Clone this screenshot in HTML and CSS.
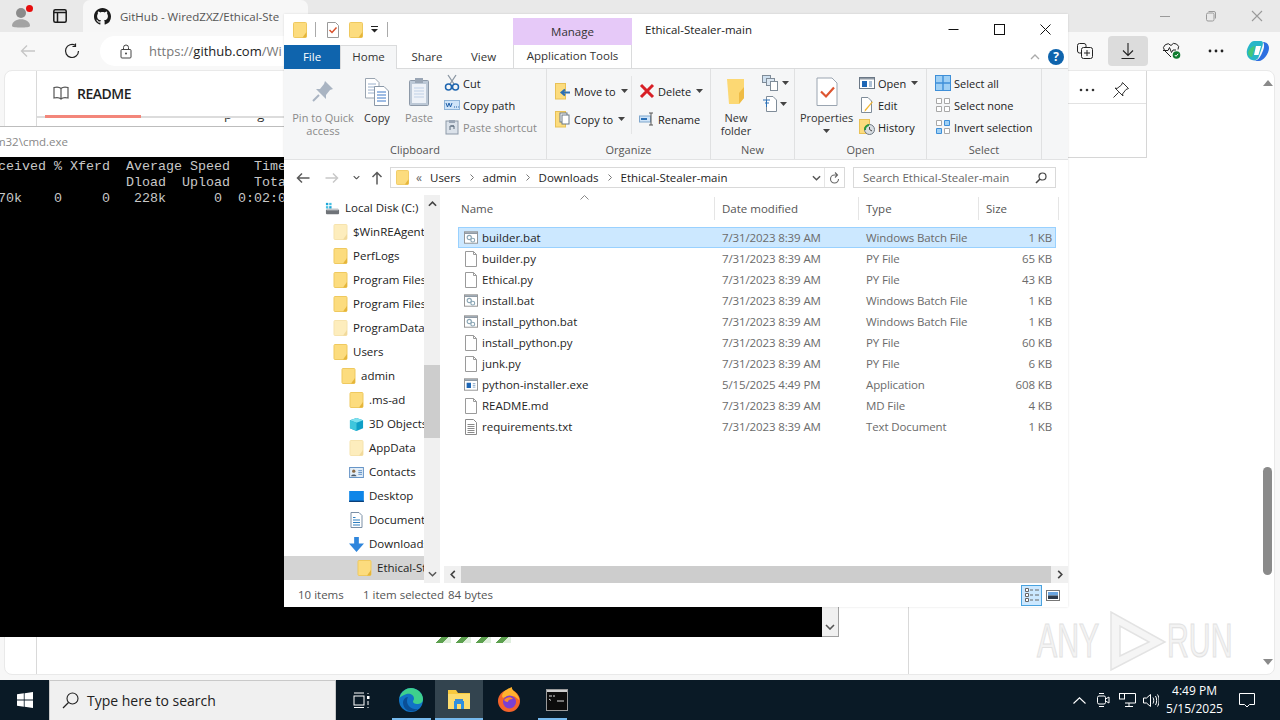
FILE: index.html
```html
<!DOCTYPE html>
<html lang="en">
<head>
<meta charset="utf-8">
<title>Ethical-Stealer-main</title>
<link rel="stylesheet" href="styles.css">
</head>
<body>
<svg class="defs" width="0" height="0" aria-hidden="true">
  <defs>
    <symbol id="folder" viewBox="0 0 14 16"><rect x=".5" y=".5" width="13" height="15" rx="1" fill="#fcdc7e" stroke="#efc95f"/><path d="M9.5 15.5 L13.5 10 V14.5 a1 1 0 0 1-1 1z" fill="#e5b53a"/></symbol>
    <symbol id="page" viewBox="0 0 14 16"><path d="M1.5.5H9.5L12.5 3.5V15.5H1.5Z" fill="#fff" stroke="#9a9a9a"/><path d="M9.5.5V3.5H12.5" fill="none" stroke="#9a9a9a"/></symbol>
    <symbol id="txt" viewBox="0 0 14 16"><path d="M1.5.5H9.5L12.5 3.5V15.5H1.5Z" fill="#fff" stroke="#8a8a8a"/><path d="M3.5 5.5H10.5M3.5 7.5H10.5M3.5 9.5H10.5M3.5 11.5H10.5M3.5 13.5H10.5" stroke="#8a8a8a"/></symbol>
    <symbol id="bat" viewBox="0 0 16 14"><rect x=".5" y=".5" width="15" height="13" fill="#fff" stroke="#8a8a8a"/><rect x="1" y="1" width="14" height="2" fill="#8f9aa5"/><circle cx="6" cy="7" r="2.4" fill="none" stroke="#8aa6b5" stroke-width="1.3"/><circle cx="10" cy="10" r="2.2" fill="none" stroke="#8aa6b5" stroke-width="1.3"/></symbol>
    <symbol id="exe" viewBox="0 0 16 14"><rect x=".5" y=".5" width="15" height="13" fill="#fff" stroke="#8a8a8a"/><rect x="1" y="1" width="14" height="2" fill="#8f9aa5"/><rect x="3" y="5" width="5" height="6" fill="#1d66b5"/><path d="M10 6H13M10 8H13M10 10H13" stroke="#7f9fc0"/></symbol>
    <symbol id="drive" viewBox="0 0 16 16"><rect x="1" y="9" width="14" height="5" rx="1" fill="#6f7378"/><rect x="2" y="8" width="12" height="2" fill="#c2c6ca"/><rect x="1" y="2" width="2.5" height="2.5" fill="#1fa7d8"/><rect x="4.5" y="2" width="2.5" height="2.5" fill="#45c0e3"/><rect x="1" y="5.5" width="2.5" height="2.5" fill="#45c0e3"/><rect x="4.5" y="5.5" width="2.5" height="2.5" fill="#1fa7d8"/></symbol>
    <symbol id="cube" viewBox="0 0 16 16"><path d="M8 1 15 3.5V12L8 15 1 12V3.5Z" fill="#0e9fc7"/><path d="M1 3.5 8 1 15 3.5 8 6Z" fill="#7fe2ef"/><path d="M1 3.5 8 6V15L1 12Z" fill="#3fc6dc"/></symbol>
    <symbol id="contacts" viewBox="0 0 16 12"><rect x=".5" y=".5" width="15" height="11" fill="#e3eef8" stroke="#5b8cc2"/><circle cx="5" cy="4.5" r="1.8" fill="#8a6a45"/><path d="M2 10c.3-2.6 5.7-2.6 6 0z" fill="#4a5a6a"/><path d="M10 4H14M10 6H14M10 8H14" stroke="#5b8cc2"/></symbol>
    <symbol id="desktop" viewBox="0 0 16 12"><rect width="16" height="12" fill="#0f86e8"/><rect y="10.5" width="16" height="1.5" fill="#0b3f78"/></symbol>
    <symbol id="docs" viewBox="0 0 14 16"><path d="M1.5.5H9.5L12.5 3.5V15.5H1.5Z" fill="#fff" stroke="#7b8fa5"/><path d="M3.5 5.5H6M3.5 8H10.5M3.5 10.5H10.5M3.5 13H10.5" stroke="#2f7fbf"/></symbol>
    <symbol id="dl" viewBox="0 0 16 16"><path d="M5.5 0H10.5V7H16L8 16 0 7H5.5Z" fill="#2f86dc"/></symbol>
    <symbol id="chev-down" viewBox="0 0 10 6"><path d="M1 1 5 5 9 1" fill="none" stroke="#555" stroke-width="1.6"/></symbol>
    <symbol id="caret" viewBox="0 0 7 4"><path d="M0 0H7L3.5 4Z" fill="#444"/></symbol>
  </defs>
</svg>

<div class="desktop">
  <div class="browser">
    <div class="tabstrip">
      <div class="avatar">
        <svg width="26" height="26" viewBox="0 0 26 26"><circle cx="11" cy="9" r="5" fill="#8b8b8b"/><path d="M2 22c0-9 18-9 18 0 0 2-18 2-18 0z" fill="#a3a3a3"/><circle cx="19.5" cy="4.5" r="3.5" fill="#e60d0d"/></svg>
      </div>
      <div class="tabview">
        <svg width="14" height="14" viewBox="0 0 14 14"><rect x=".8" y=".8" width="12.4" height="12.4" rx="1.5" fill="none" stroke="#1a1a1a" stroke-width="1.5"/><path d="M1 3.5H13M4.5 3.5V13" stroke="#1a1a1a" stroke-width="1.5"/></svg>
      </div>
      <div class="tab">
        <svg class="gh" width="16" height="16" viewBox="0 0 16 16"><path fill="#1b1b1b" d="M8 0C3.58 0 0 3.58 0 8c0 3.54 2.29 6.53 5.47 7.59.4.07.55-.17.55-.38 0-.19-.01-.82-.01-1.49-2.01.37-2.53-.49-2.69-.94-.09-.23-.48-.94-.82-1.13-.28-.15-.68-.52-.01-.53.63-.01 1.08.58 1.23.82.72 1.21 1.87.87 2.33.66.07-.52.28-.87.51-1.07-1.78-.2-3.64-.89-3.64-3.95 0-.87.31-1.59.82-2.15-.08-.2-.36-1.02.08-2.12 0 0 .67-.21 2.2.82.64-.18 1.32-.27 2-.27.68 0 1.36.09 2 .27 1.53-1.04 2.2-.82 2.2-.82.44 1.1.16 1.92.08 2.12.51.56.82 1.27.82 2.15 0 3.07-1.87 3.75-3.65 3.95.29.25.54.73.54 1.48 0 1.07-.01 1.93-.01 2.2 0 .21.15.46.55.38A8.013 8.013 0 0016 8c0-4.42-3.58-8-8-8z"/></svg>
        <span class="tab-title">GitHub - WiredZXZ/Ethical-Ste</span>
      </div>
      <div class="winctl">
        <span class="winbtn"><svg width="12" height="12" viewBox="0 0 12 12"><path d="M1 6.5H11" stroke="#9a9a9a"/></svg></span>
        <span class="winbtn"><svg width="12" height="12" viewBox="0 0 12 12"><rect x="1.5" y="3" width="7.5" height="8" rx="1.5" fill="none" stroke="#9a9a9a"/><path d="M3.5 1.5H9a1.5 1.5 0 0 1 1.5 1.5V8.5" fill="none" stroke="#9a9a9a"/></svg></span>
        <span class="winbtn"><svg width="12" height="12" viewBox="0 0 12 12"><path d="M1 1 11 11M11 1 1 11" stroke="#9a9a9a" stroke-width="1.1"/></svg></span>
      </div>
    </div>

    <div class="toolbar">
      <span class="tool tool-back"><svg width="16" height="14" viewBox="0 0 16 14"><path d="M15 7H1.5M7 1.5 1.5 7 7 12.5" fill="none" stroke="#c6c6c6" stroke-width="1.3"/></svg></span>
      <span class="tool tool-reload"><svg width="16" height="16" viewBox="0 0 16 16"><path d="M14.5 8A6.5 6.5 0 1 1 11.5 2.5M11.5 .5V3.5H8.5" fill="none" stroke="#222" stroke-width="1.2"/></svg></span>
      <div class="urlbar">
        <svg class="lock" width="12" height="15" viewBox="0 0 12 15"><rect x="1" y="5.5" width="10" height="8.5" rx="1" fill="none" stroke="#444"/><path d="M3.5 5.5V3.5a2.5 2.5 0 0 1 5 0v2" fill="none" stroke="#444"/><circle cx="6" cy="9.5" r="1" fill="#444"/></svg>
        <span class="url"><span class="url-dim">https://</span>github.com<span class="url-dim">/Wi</span></span>
      </div>
      <div class="toolright">
        <span class="tool tool-coll"><svg width="18" height="18" viewBox="0 0 18 18"><path d="M5 11H3.5A2 2 0 0 1 1.5 9V3.5A2 2 0 0 1 3.5 1.5H8A2 2 0 0 1 10 3.5V5" fill="none" stroke="#222"/><rect x="5.5" y="5.5" width="11" height="11" rx="2" fill="none" stroke="#222"/><path d="M11 8V14M8 11H14" stroke="#222"/></svg></span>
        <span class="tool tool-dl"><svg width="18" height="18" viewBox="0 0 18 18"><path d="M9 1V13M4 8.5 9 13.5 14 8.5M2.5 16.5H15.5" fill="none" stroke="#222" stroke-width="1.1"/></svg></span>
        <span class="tool tool-heart"><svg width="20" height="18" viewBox="0 0 20 18"><path d="M9 15 2.5 8.5A4 4 0 0 1 9 3.5a4 4 0 0 1 7 4" fill="none" stroke="#222"/><path d="M1 8.5H6L7.5 5.5 9.5 10.5 11 8H14" fill="none" stroke="#222"/><circle cx="14.5" cy="13" r="3.8" fill="#0f7b2f"/><path d="M12.8 13 14 14.3 16.2 11.8" fill="none" stroke="#fff"/></svg></span>
        <span class="tool tool-more"><svg width="16" height="4" viewBox="0 0 16 4"><circle cx="2" cy="2" r="1.4" fill="#222"/><circle cx="8" cy="2" r="1.4" fill="#222"/><circle cx="14" cy="2" r="1.4" fill="#222"/></svg></span>
        <span class="tool tool-copilot"><svg width="24" height="24" viewBox="0 0 24 24"><path d="M8 2H15C18 2 17 6 15.5 10L13 17C12 21 9 22 6 21 2 20 0 15 1 11 2 7 5 2 8 2Z" fill="#27b6c8"/><path d="M7 22H13C17 22 23 15 23 9 23 5 20 3 17 3 19 6 18 10 16 14 14 19 11 22 7 22Z" fill="#2d6fe0"/><path d="M10 7H15L12.5 16H8Z" fill="#fff"/><path d="M2 14C3 10 6 7 9 7L6 18C4 18 2 16 2 14Z" fill="#42c77a"/></svg></span>
      </div>
    </div>

    <div class="card">
      <div class="rail"></div>
      <div class="readme">
        <div class="readme-head">
          <div class="readme-tab">
            <svg width="16" height="14" viewBox="0 0 16 14"><path d="M8 2.5C6.5 1 3.5 1 1 1.5V12C3.5 11.5 6.5 11.5 8 13 9.5 11.5 12.5 11.5 15 12V1.5C12.5 1 9.5 1 8 2.5ZM8 2.5V13" fill="none" stroke="#555" stroke-width="1.2"/></svg>
            <span>README</span>
          </div>
        </div>
        <div class="readme-clip"><p>p g j</p></div>
      </div>
      <div class="side">
        <div class="side-panel">
          <div class="side-row">
            <svg width="16" height="4" viewBox="0 0 16 4"><circle cx="2" cy="2" r="1.3" fill="#333"/><circle cx="8" cy="2" r="1.3" fill="#333"/><circle cx="14" cy="2" r="1.3" fill="#333"/></svg>
            <svg width="18" height="18" viewBox="0 0 18 18"><path d="M10.5 1.5 16.5 7.5 14 8.5 10.5 13 11 15 3 7 5 7.5 9.5 4Z M6.5 11.5 1.5 16.5" fill="#fff" stroke="#333"/></svg>
          </div>
        </div>
      </div>
      <div class="pagescroll">
        <svg width="10" height="6" viewBox="0 0 10 6"><path d="M0 6 5 0 10 6Z" fill="#8a8a8a"/></svg>
        <div class="pagescroll-track"><div class="pagescroll-thumb"></div></div>
        <svg width="10" height="6" viewBox="0 0 10 6"><path d="M0 0 5 6 10 0Z" fill="#8a8a8a"/></svg>
      </div>
    </div>
  </div>

  <div class="watermark"><span>ANY</span><svg width="60" height="62" viewBox="0 0 60 62"><path d="M4 2V60L58 32Z M13 16V46L42 32Z" fill="#f5f5f5" fill-rule="evenodd" stroke="#e3e3e3" stroke-width="1.5"/></svg><span>RUN</span></div>

  <div class="tiles">
    <i class="tile"></i><i class="tile"></i><i class="tile"></i><i class="tile"></i>
  </div>

  <section class="cmd">
    <div class="cmd-title">C:\Windows\system32\cmd.exe</div>
    <div class="cmd-body">
      <pre class="console">ceived % Xferd  Average Speed   Time    Time     Time  Current
                Dload  Upload   Total   Spent    Left  Speed
70k    0     0   228k      0  0:02:06 --:--:--  0:02:06  228k</pre>
      <div class="cmd-scroll"><svg width="10" height="6"><use href="#chev-down"/></svg></div>
    </div>
  </section>

  <section class="explorer">
    <div class="ex-title">
      <div class="qa">
        <svg width="14" height="16"><use href="#folder"/></svg>
        <i class="qa-sep"></i>
        <svg class="qa-props" width="14" height="16" viewBox="0 0 14 16"><path d="M1.5.5H9.5L12.5 3.5V15.5H1.5Z" fill="#fff" stroke="#9a9a9a"/><path d="M3.5 8 6 10.5 10.5 5.5" fill="none" stroke="#d9512c" stroke-width="1.5"/></svg>
        <svg class="qa-folder" width="14" height="16"><use href="#folder"/></svg>
        <svg class="qa-more" width="9" height="7" viewBox="0 0 9 7"><path d="M1 .5H8" stroke="#222"/><path d="M1 3H8L4.5 6.5Z" fill="#222"/></svg>
        <i class="qa-sep"></i>
      </div>
      <div class="manage">Manage</div>
      <div class="ex-name">Ethical-Stealer-main</div>
      <div class="ex-ctl">
        <span class="ctl"><svg width="11" height="11" viewBox="0 0 11 11"><path d="M.5 5.5H10.5" stroke="#111"/></svg></span>
        <span class="ctl"><svg width="11" height="11" viewBox="0 0 11 11"><rect x=".5" y=".5" width="10" height="10" fill="none" stroke="#111"/></svg></span>
        <span class="ctl"><svg width="11" height="11" viewBox="0 0 11 11"><path d="M.5 .5 10.5 10.5M10.5 .5 .5 10.5" stroke="#111"/></svg></span>
      </div>
    </div>

    <div class="ex-tabs">
      <span class="rtab rtab-file">File</span>
      <span class="rtab rtab-home">Home</span>
      <span class="rtab rtab-share">Share</span>
      <span class="rtab rtab-view">View</span>
      <span class="rtab rtab-app">Application Tools</span>
      <div class="ex-help">
        <svg width="10" height="6" viewBox="0 0 10 6"><path d="M1 5 5 1 9 5" fill="none" stroke="#aaa" stroke-width="1.3"/></svg>
        <span class="help">?</span>
      </div>
    </div>

    <div class="ribbon">
      <div class="group g-clip">
        <div class="g-body">
          <div class="big big-pin off">
            <svg width="24" height="26" viewBox="0 0 24 26"><path d="M14 2 22 10 19 11 15 16 15 20 5 10 9 10 13 5Z" fill="#a9b4c2"/><path d="M8 16 2 22" stroke="#a9b4c2" stroke-width="2"/></svg>
            <span>Pin to Quick<br>access</span>
          </div>
          <div class="big big-copy">
            <svg width="26" height="30" viewBox="0 0 26 30"><path d="M1.5 1.5H11L15 5.5V21H1.5Z" fill="#fff" stroke="#9aa5b1"/><path d="M4 7H12M4 10H12M4 13H12M4 16H12" stroke="#9ab0cc"/><path d="M10.5 9.5H20L24.5 14V28.5H10.5Z" fill="#fff" stroke="#8a98a8"/><path d="M13 15H22M13 18H22M13 21H22M13 24H22" stroke="#3c79c8"/></svg>
            <span>Copy</span>
          </div>
          <div class="big big-paste off">
            <svg width="22" height="30" viewBox="0 0 22 30"><rect x="1.5" y="3.5" width="19" height="25" rx="1" fill="#bcc8d6" stroke="#8d99a8"/><rect x="4" y="7" width="14" height="19" fill="#eef2f8"/><path d="M6 11H16M6 14H16M6 17H16M6 20H16" stroke="#bfd0e6"/><rect x="7" y="1" width="8" height="5" fill="#9aa6b5"/></svg>
            <span>Paste</span>
          </div>
          <div class="smalls">
            <div class="small"><svg width="16" height="18" viewBox="0 0 16 18"><path d="M4 1 10 10M12 1 6 10" stroke="#8a96a3" stroke-width="1.3"/><circle cx="4.5" cy="13" r="3" fill="none" stroke="#1f66b0" stroke-width="1.5"/><circle cx="11.5" cy="13" r="3" fill="none" stroke="#1f66b0" stroke-width="1.5"/></svg><span>Cut</span></div>
            <div class="small"><svg width="16" height="10" viewBox="0 0 16 10"><rect x=".5" y=".5" width="15" height="9" fill="#cfe4f8" stroke="#8fb4d8"/><path d="M2 3 3.5 7 5 3 6.5 7 8 3M10 7H11M12 7H13M14 7H14.8" fill="none" stroke="#1f5fa8"/></svg><span>Copy path</span></div>
            <div class="small off"><svg width="14" height="16" viewBox="0 0 14 16"><rect x="1" y="2" width="12" height="13" fill="#dbe2ea" stroke="#8d99a8"/><rect x="4" y="1" width="6" height="3" fill="#9aa6b5"/><path d="M5 11V7H9M6 7l3 0v3" fill="none" stroke="#5a6a7a"/></svg><span>Paste shortcut</span></div>
          </div>
        </div>
        <div class="g-label">Clipboard</div>
      </div>

      <div class="group g-org">
        <div class="g-body">
          <div class="smalls two">
            <div class="small"><svg width="16" height="17" viewBox="0 0 16 17"><rect x=".5" y=".5" width="10" height="15.5" fill="#fcdc7e" stroke="#e8c157"/><path d="M15 9.5H8M10 6.5 6.5 9.5 10 12.5" fill="none" stroke="#2a6fb5" stroke-width="2"/></svg><span>Move to</span><svg class="cr" width="7" height="4"><use href="#caret"/></svg></div>
            <div class="small"><svg width="16" height="17" viewBox="0 0 16 17"><rect x=".5" y=".5" width="10" height="15.5" fill="#fcdc7e" stroke="#e8c157"/><rect x="5" y="2" width="7" height="9" fill="#fff" stroke="#6b7886"/><rect x="7" y="4" width="7" height="9" fill="#fff" stroke="#6b7886"/></svg><span>Copy to</span><svg class="cr" width="7" height="4"><use href="#caret"/></svg></div>
          </div>
          <i class="g-sep"></i>
          <div class="smalls two">
            <div class="small"><svg width="16" height="16" viewBox="0 0 16 16"><path d="M2 2 14 14M14 2 2 14" stroke="#d81f26" stroke-width="3"/></svg><span>Delete</span><svg class="cr" width="7" height="4"><use href="#caret"/></svg></div>
            <div class="small"><svg width="16" height="16" viewBox="0 0 16 16"><rect x=".5" y="5" width="11" height="6" fill="#cfe4f8" stroke="#7fa6cc"/><rect x="2" y="7" width="6" height="2" fill="#2a6fb5"/><path d="M10 2H14M12 2V14M10 14H14" fill="none" stroke="#555"/></svg><span>Rename</span></div>
          </div>
        </div>
        <div class="g-label">Organize</div>
      </div>

      <div class="group g-new">
        <div class="g-body">
          <div class="big big-new">
            <svg width="20" height="28" viewBox="0 0 20 28"><path d="M1 1H18V20L13 26H3Z" fill="#fcd873"/><path d="M13 26 18 20V9L13 15Z" fill="#efbc45"/></svg>
            <span>New<br>folder</span>
          </div>
          <div class="new-smalls">
            <div class="mini"><svg width="18" height="16" viewBox="0 0 18 16"><rect x=".5" y=".5" width="8" height="7" fill="#cfe0ef" stroke="#7f8c99"/><rect x="4.5" y="3.5" width="8" height="7" fill="#dbe7f2" stroke="#7f8c99"/><rect x="8.5" y="6.5" width="7" height="9" fill="#fff" stroke="#7f8c99"/></svg><svg width="7" height="4"><use href="#caret"/></svg></div>
            <div class="mini"><svg width="16" height="16" viewBox="0 0 16 16"><path d="M4.5.5H11L14.5 4V15.5H4.5Z" fill="#fff" stroke="#7f8c99"/><path d="M1 4H8M3 7H7M4.5 4V11" stroke="#2a6fb5"/></svg><svg width="7" height="4"><use href="#caret"/></svg></div>
          </div>
        </div>
        <div class="g-label">New</div>
      </div>

      <div class="group g-open">
        <div class="g-body">
          <div class="big big-props">
            <svg width="22" height="29" viewBox="0 0 22 29"><path d="M1 .5H16L21 5.5V28H1Z" fill="#fff" stroke="#9aa5b1"/><path d="M5 14 10 19 18 10" fill="none" stroke="#dd5530" stroke-width="2.2"/></svg>
            <span>Properties</span>
            <svg class="props-caret" width="7" height="4"><use href="#caret"/></svg>
          </div>
          <div class="smalls">
            <div class="small"><svg width="16" height="12" viewBox="0 0 16 12"><rect x=".5" y=".5" width="15" height="11" fill="#fff" stroke="#6b7886"/><rect x="1" y="1" width="14" height="1.5" fill="#8f9aa5"/><rect x="3" y="4" width="5" height="6" fill="#1d66b5"/><path d="M10 5H13M10 7H13M10 9H13" stroke="#5a82ad"/></svg><span>Open</span><svg class="cr" width="7" height="4"><use href="#caret"/></svg></div>
            <div class="small"><svg width="16" height="16" viewBox="0 0 16 16"><path d="M2.5.5H9L12.5 4V15.5H2.5Z" fill="#fff" stroke="#7f8c99"/><path d="M14 5 7 13.5 5.5 15 6 12.5 13 4.5Z" fill="#f2b632"/></svg><span>Edit</span></div>
            <div class="small"><svg width="16" height="16" viewBox="0 0 16 16"><rect x=".5" y=".5" width="10" height="14" fill="#fcdc7e" stroke="#e8c157"/><circle cx="10.5" cy="10.5" r="5" fill="#d8dde2" stroke="#6e7882"/><path d="M6 11A4.5 4.5 0 0 1 10 6" fill="none" stroke="#2f9a3a" stroke-width="2"/><path d="M10.5 8V10.5L13 12" fill="none" stroke="#444"/></svg><span>History</span></div>
          </div>
        </div>
        <div class="g-label">Open</div>
      </div>

      <div class="group g-sel">
        <div class="g-body">
          <div class="smalls">
            <div class="small"><svg width="16" height="16" viewBox="0 0 16 16"><rect width="16" height="16" fill="#3e8fd8"/><path d="M1 1H7.3V7.3H1ZM8.7 1H15V7.3H8.7ZM1 8.7H7.3V15H1ZM8.7 8.7H15V15H8.7Z" fill="#9fd0f5"/></svg><span>Select all</span></div>
            <div class="small"><svg width="16" height="16" viewBox="0 0 16 16"><path d="M1.5 1.5H6.5V6.5H1.5ZM9.5 1.5H14.5V6.5H9.5ZM1.5 9.5H6.5V14.5H1.5ZM9.5 9.5H14.5V14.5H9.5Z" fill="#fff" stroke="#a8a8a8"/></svg><span>Select none</span></div>
            <div class="small"><svg width="16" height="16" viewBox="0 0 16 16"><path d="M1.5 1.5H6.5V6.5H1.5ZM9.5 9.5H14.5V14.5H9.5Z" fill="#fff" stroke="#a8a8a8"/><path d="M9.5 1.5H14.5V6.5H9.5ZM1.5 9.5H6.5V14.5H1.5Z" fill="#9fd0f5" stroke="#3e8fd8"/></svg><span>Invert selection</span></div>
          </div>
        </div>
        <div class="g-label">Select</div>
      </div>
    </div>

    <div class="ex-nav">
      <span class="nav-btn nb-back"><svg width="14" height="12" viewBox="0 0 14 12"><path d="M13.5 6H1.5M6 1.5 1.5 6 6 10.5" fill="none" stroke="#5a5a5a" stroke-width="1.5"/></svg></span>
      <span class="nav-btn nb-fwd"><svg width="14" height="12" viewBox="0 0 14 12"><path d="M.5 6H12.5M8 1.5 12.5 6 8 10.5" fill="none" stroke="#c8c8c8" stroke-width="1.5"/></svg></span>
      <span class="nav-btn nb-down"><svg width="7" height="5" viewBox="0 0 10 6"><use href="#chev-down"/></svg></span>
      <span class="nav-btn nb-up"><svg width="12" height="14" viewBox="0 0 12 14"><path d="M6 13.5V1.5M1.5 6 6 1.5 10.5 6" fill="none" stroke="#5a5a5a" stroke-width="1.5"/></svg></span>
      <div class="addr">
        <svg class="addr-folder" width="13" height="15"><use href="#folder"/></svg>
        <span class="crumb-more">«</span>
        <span class="crumb">Users</span><svg class="sep" width="4" height="7" viewBox="0 0 4 7"><path d="M.5 .5 3.5 3.5 .5 6.5" fill="none" stroke="#777"/></svg>
        <span class="crumb">admin</span><svg class="sep" width="4" height="7" viewBox="0 0 4 7"><path d="M.5 .5 3.5 3.5 .5 6.5" fill="none" stroke="#777"/></svg>
        <span class="crumb">Downloads</span><svg class="sep" width="4" height="7" viewBox="0 0 4 7"><path d="M.5 .5 3.5 3.5 .5 6.5" fill="none" stroke="#777"/></svg>
        <span class="crumb">Ethical-Stealer-main</span>
        <svg class="addr-chev" width="9" height="6"><use href="#chev-down"/></svg>
        <span class="addr-refresh"><svg width="11" height="12" viewBox="0 0 11 12"><path d="M9.5 7A4 4 0 1 1 5.5 3H8M6 .5 8.5 3 6 5.5" fill="none" stroke="#666" stroke-width="1.1"/></svg></span>
      </div>
      <div class="search">
        <span>Search Ethical-Stealer-main</span>
        <svg width="12" height="12" viewBox="0 0 12 12"><circle cx="7.5" cy="4.5" r="3.5" fill="none" stroke="#444" stroke-width="1.2"/><path d="M5 7 1 11" stroke="#444" stroke-width="1.6"/></svg>
      </div>
    </div>

    <div class="ex-main">
      <div class="tree">
        <div class="t l0"><svg width="15" height="15"><use href="#drive"/></svg><span>Local Disk (C:)</span></div>
        <div class="t l1 dim"><svg width="14" height="16"><use href="#folder"/></svg><span>$WinREAgent</span></div>
        <div class="t l1"><svg width="14" height="16"><use href="#folder"/></svg><span>PerfLogs</span></div>
        <div class="t l1"><svg width="14" height="16"><use href="#folder"/></svg><span>Program Files</span></div>
        <div class="t l1"><svg width="14" height="16"><use href="#folder"/></svg><span>Program Files (x86)</span></div>
        <div class="t l1 dim"><svg width="14" height="16"><use href="#folder"/></svg><span>ProgramData</span></div>
        <div class="t l1"><svg width="14" height="16"><use href="#folder"/></svg><span>Users</span></div>
        <div class="t l2"><svg width="14" height="16"><use href="#folder"/></svg><span>admin</span></div>
        <div class="t l3"><svg width="14" height="16"><use href="#folder"/></svg><span>.ms-ad</span></div>
        <div class="t l3"><svg width="15" height="15"><use href="#cube"/></svg><span>3D Objects</span></div>
        <div class="t l3 dim"><svg width="14" height="16"><use href="#folder"/></svg><span>AppData</span></div>
        <div class="t l3"><svg width="15" height="11"><use href="#contacts"/></svg><span>Contacts</span></div>
        <div class="t l3"><svg width="15" height="11"><use href="#desktop"/></svg><span>Desktop</span></div>
        <div class="t l3"><svg width="14" height="16"><use href="#docs"/></svg><span>Documents</span></div>
        <div class="t l3"><svg width="15" height="15"><use href="#dl"/></svg><span>Downloads</span></div>
        <div class="t l4 sel"><svg width="14" height="16"><use href="#folder"/></svg><span>Ethical-Stealer-main</span></div>
      </div>
      <div class="treescroll">
        <svg width="9" height="6" viewBox="0 0 10 6"><path d="M1 5 5 1 9 5" fill="none" stroke="#444" stroke-width="1.8"/></svg>
        <div class="treescroll-track"><div class="treescroll-thumb"></div></div>
        <svg width="9" height="6"><use href="#chev-down"/></svg>
      </div>

      <div class="files">
        <div class="f-head">
          <span class="fh fh-name">Name<svg class="sortcaret" width="9" height="5" viewBox="0 0 9 5"><path d="M.5 4.5 4.5 .5 8.5 4.5" fill="none" stroke="#888"/></svg></span>
          <span class="fh">Date modified</span>
          <span class="fh">Type</span>
          <span class="fh">Size</span>
        </div>
        <div class="f-list">
          <div class="f sel"><span class="f-name"><svg width="14" height="13"><use href="#bat"/></svg>builder.bat</span><span>7/31/2023 8:39 AM</span><span>Windows Batch File</span><span class="f-size">1 KB</span></div>
          <div class="f"><span class="f-name"><svg width="14" height="16"><use href="#page"/></svg>builder.py</span><span>7/31/2023 8:39 AM</span><span>PY File</span><span class="f-size">65 KB</span></div>
          <div class="f"><span class="f-name"><svg width="14" height="16"><use href="#page"/></svg>Ethical.py</span><span>7/31/2023 8:39 AM</span><span>PY File</span><span class="f-size">43 KB</span></div>
          <div class="f"><span class="f-name"><svg width="14" height="13"><use href="#bat"/></svg>install.bat</span><span>7/31/2023 8:39 AM</span><span>Windows Batch File</span><span class="f-size">1 KB</span></div>
          <div class="f"><span class="f-name"><svg width="14" height="13"><use href="#bat"/></svg>install_python.bat</span><span>7/31/2023 8:39 AM</span><span>Windows Batch File</span><span class="f-size">1 KB</span></div>
          <div class="f"><span class="f-name"><svg width="14" height="16"><use href="#page"/></svg>install_python.py</span><span>7/31/2023 8:39 AM</span><span>PY File</span><span class="f-size">60 KB</span></div>
          <div class="f"><span class="f-name"><svg width="14" height="16"><use href="#page"/></svg>junk.py</span><span>7/31/2023 8:39 AM</span><span>PY File</span><span class="f-size">6 KB</span></div>
          <div class="f"><span class="f-name"><svg width="14" height="13"><use href="#exe"/></svg>python-installer.exe</span><span>5/15/2025 4:49 PM</span><span>Application</span><span class="f-size">608 KB</span></div>
          <div class="f"><span class="f-name"><svg width="14" height="16"><use href="#page"/></svg>README.md</span><span>7/31/2023 8:39 AM</span><span>MD File</span><span class="f-size">4 KB</span></div>
          <div class="f"><span class="f-name"><svg width="14" height="16"><use href="#txt"/></svg>requirements.txt</span><span>7/31/2023 8:39 AM</span><span>Text Document</span><span class="f-size">1 KB</span></div>
        </div>
        <div class="hscroll">
          <span class="hs-btn"><svg width="6" height="9" viewBox="0 0 6 10"><path d="M5 1 1 5 5 9" fill="none" stroke="#444" stroke-width="1.8"/></svg></span>
          <div class="hs-thumb"></div>
          <span class="hs-btn"><svg width="6" height="9" viewBox="0 0 6 10"><path d="M1 1 5 5 1 9" fill="none" stroke="#444" stroke-width="1.8"/></svg></span>
        </div>
      </div>
    </div>

    <div class="ex-status">
      <span class="st-items">10 items</span>
      <span class="st-sel">1 item selected</span>
      <span class="st-size">84 bytes</span>
      <div class="views">
        <span class="view view-on"><svg width="16" height="16" viewBox="0 0 16 16"><path d="M1.5 1.5H4.5V4.5H1.5ZM1.5 6.5H4.5V9.5H1.5ZM1.5 11.5H4.5V14.5H1.5Z" fill="#fff" stroke="#666"/><path d="M6 3H9M11 3H15M6 8H9M11 8H15M6 13H9M11 13H15" stroke="#666"/></svg></span>
        <span class="view view-pre"><svg width="14" height="11" viewBox="0 0 14 11"><rect x=".5" y=".5" width="13" height="10" fill="#fff" stroke="#777"/><rect x="2" y="2" width="10" height="3.5" fill="#6aa5e0"/><rect x="2" y="5.5" width="10" height="3.5" fill="#2d3a4a"/></svg></span>
      </div>
    </div>
  </section>

  <div class="taskbar">
    <div class="start"><svg width="16" height="16" viewBox="0 0 16 16"><path d="M0 2.3 6.8 1.3V7.6H0ZM7.6 1.2 16 0V7.6H7.6ZM0 8.4H6.8V14.7L0 13.7ZM7.6 8.4H16V16L7.6 14.8Z" fill="#fff"/></svg></div>
    <div class="tb-search">
      <svg width="17" height="17" viewBox="0 0 17 17"><circle cx="10.5" cy="6.5" r="5.5" fill="none" stroke="#222" stroke-width="1.1"/><path d="M6.5 10.5 1 16" stroke="#222" stroke-width="1.3"/></svg>
      <span>Type here to search</span>
    </div>
    <div class="tk tk-view"><svg width="17" height="17" viewBox="0 0 17 17"><path d="M1 1H11M1 15.5H11" stroke="#fff"/><rect x="1" y="4" width="10" height="9" fill="none" stroke="#fff"/><rect x="14" y="4" width="2.5" height="3" fill="#fff"/><path d="M15 9V13M15 1V2M15 15V16" stroke="#fff"/></svg></div>
    <div class="tk tk-on1"><svg width="26" height="26" viewBox="0 0 26 26"><circle cx="13" cy="13" r="12" fill="#1173c6"/><path d="M1.5 11C3 4 9 1 13 1c6 0 12 5 12 11 0 4-3 5-6 5-2.5 0-4-1-4-2.5 0-1 1-1.5 1-3C16 8 12 6 8.5 7 5 8 2.5 10 1.5 11Z" fill="#3ed08d"/><path d="M9 14C9 19 14 23 20 22 15 26 6 25 5 16 5 13 7 10 10 10 9.5 11 9 12.5 9 14Z" fill="#0a4f97"/></svg></div>
    <div class="tk tk-active"><svg width="24" height="22" viewBox="0 0 24 22"><path d="M1 2H9L11 5H23V21H1Z" fill="#f8c93e"/><rect x="1" y="6" width="22" height="15" fill="#fcdc6f"/><rect x="8" y="11" width="8" height="2" fill="#3a8bd0"/><path d="M7 21V13H17V21H14V16H10V21Z" fill="#2f8fe0"/></svg></div>
    <div class="tk tk-fox"><svg width="24" height="26" viewBox="0 0 24 26"><circle cx="12" cy="14" r="11" fill="#f4642a"/><path d="M5 9C6 3 13 1 15 0 14 3 20 5 22 11 23 16 20 9 15 9 8 9 6 13 5 9Z" fill="#ffb22e"/><circle cx="12.5" cy="15" r="6.5" fill="#7a3fd1"/><path d="M7 13C9 10 14 9 16 12 13 12 11 13 11 15 9 15 8 14 7 13Z" fill="#ff8a2a"/></svg></div>
    <div class="tk tk-cmd"><svg width="22" height="22" viewBox="0 0 22 22"><rect width="22" height="22" fill="#9a9a9a"/><rect x="1" y="1" width="20" height="20" fill="#0c0c0c"/><rect x="1" y="1" width="20" height="2" fill="#cfcfcf"/><path d="M3 7H6M7 7H9M3 10 5 11.5M11 12H18" stroke="#ddd"/></svg></div>
    <div class="tray">
      <span class="ti"><svg width="13" height="7" viewBox="0 0 13 7"><path d="M.5 6.5 6.5 .8 12.5 6.5" fill="none" stroke="#fff" stroke-width="1.1"/></svg></span>
      <span class="ti"><svg width="14" height="16" viewBox="0 0 14 16"><rect x="1.5" y="4" width="8" height="8" rx="1.5" fill="none" stroke="#fff"/><path d="M9.5 7 13 5V11L9.5 9M3 1.5H8M3 14.5H8" fill="none" stroke="#fff"/></svg></span>
      <span class="ti"><svg width="17" height="14" viewBox="0 0 17 14"><path d="M3 .5H16.5V10H6M10 10V13M6 13.5H14" fill="none" stroke="#fff"/><rect x=".5" y=".5" width="5" height="5.5" fill="#0a1a26" stroke="#fff"/></svg></span>
      <span class="ti"><svg width="16" height="15" viewBox="0 0 16 15"><path d="M.5 5H3.5L7.5 1.5V13.5L3.5 10H.5Z" fill="none" stroke="#fff"/><path d="M10 4.5C11 6 11 9 10 10.5M12.5 3C14 5 14 10 12.5 12M14.5 1.5C16.5 4.5 16.5 10.5 14.5 13.5" fill="none" stroke="#fff"/></svg></span>
      <div class="clock"><span>4:49 PM</span><span>5/15/2025</span></div>
      <span class="ti ti-action"><svg width="16" height="15" viewBox="0 0 16 15"><path d="M.5 .5H15.5V11.5H10.5L8 14 5.5 11.5H.5Z" fill="none" stroke="#fff"/></svg></span>
      <span class="ti-show"></span>
    </div>
  </div>
</div>
</body>
</html>
```
FILE: styles.css
```css
* { box-sizing: border-box; }
html, body { margin: 0; padding: 0; }
body { font-family: "Open Sans", "Noto Sans", sans-serif; font-size: 11.5px; color: #222; }
.defs { position: absolute; }
svg { display: block; flex: none; }

.desktop { position: relative; width: 1280px; height: 720px; overflow: hidden; display: flex; flex-direction: column; background: #f7f7f7; }

/* Browser window */
.browser { flex: 1; display: flex; flex-direction: column; min-height: 0; }
.tabstrip { height: 32px; background: #e9e9e9; display: flex; align-items: center; }
.avatar { width: 26px; margin-left: 10px; margin-top: 2px; }
.tabview { margin-left: 17px; }
.tab { margin-left: 16px; width: 225px; height: 32px; background: #f7f7f7; border-radius: 7px 7px 0 0; display: flex; align-items: center; padding-left: 11px; gap: 9px; }
.gh { width: 17px; height: 17px; }
.tab-title { font-size: 11.5px; color: #555; white-space: nowrap; overflow: hidden; }
.winctl { margin-left: auto; display: flex; margin-right: 0; }
.winbtn { width: 46px; height: 32px; display: flex; align-items: center; justify-content: center; }

.toolbar { height: 38px; display: flex; align-items: center; background: #f8f8f8; }
.tool { display: flex; align-items: center; justify-content: center; }
.tool-back { width: 16px; margin-left: 20px; }
.tool-reload { width: 16px; margin-left: 28px; }
.urlbar { margin-left: 20px; width: 900px; height: 30px; border-radius: 15px; background: #fff; display: flex; align-items: center; padding-left: 20px; gap: 17px; }
.url { font-size: 13px; color: #1c1c1c; white-space: nowrap; }
.url-dim { color: #777; }
.toolright { margin-left: auto; display: flex; align-items: center; }
.tool-coll { width: 20px; margin-right: 13px; }
.tool-dl { width: 40px; height: 30px; background: #dcdcdc; border-radius: 4px; }
.tool-heart { width: 20px; margin-left: 14px; }
.tool-more { width: 16px; margin-left: 26px; }
.tool-copilot { width: 24px; margin-left: 22px; margin-right: 10px; }

.card { flex: 1; min-height: 0; margin: 0 5px 5px 4px; background: #fff; border: 1px solid #e9e9e9; border-radius: 8px; display: flex; overflow: hidden; }
.rail { width: 32px; border-right: 1px solid #d9d9d9; }
.readme { width: 872px; border-right: 1px solid #d9d9d9; }
.readme-head { height: 47px; border-bottom: 2px solid #dcdcdc; padding-left: 8px; }
.readme-tab { width: 96px; height: 47px; border-bottom: 3px solid #f3867a; display: flex; align-items: center; gap: 8px; padding-left: 8px; font-size: 14px; font-weight: 600; color: #1f1f1f; letter-spacing: -.5px; }
.readme-clip { height: 6px; overflow: hidden; padding-left: 187px; }
.readme-clip p { margin: -13px 0 0; font-size: 13px; word-spacing: 22px; color: #333; }
.side { flex: 1; }
.side-panel { width: 238px; height: 87px; border-right: 1px solid #d6d6d6; border-bottom: 1px solid #d6d6d6; }
.side-row { height: 33px; border-bottom: 1px solid #e2e2e2; display: flex; align-items: center; justify-content: flex-end; gap: 17px; padding-right: 16px; padding-top: 5px; }
.pagescroll { width: 12px; margin-right: 0; display: flex; flex-direction: column; align-items: center; padding: 9px 0 9px; }
.pagescroll-track { flex: 1; width: 100%; padding-top: 381px; padding-left: 1px; }
.pagescroll-thumb { width: 9px; height: 108px; border-radius: 5px; background: #8a8a8a; }

.watermark { position: absolute; left: 1037px; top: 610px; width: 196px; height: 62px; display: flex; align-items: center; font-family: "Liberation Sans", sans-serif; font-size: 42px; line-height: 62px; color: #f3f3f3; -webkit-text-stroke: 1px #e2e2e2; }
.watermark span { display: block; flex: none; width: 65px; transform: scale(.72, 1.15); transform-origin: left center; white-space: nowrap; }
.watermark svg { margin: 0 0 0 5px; }

.tiles { position: absolute; left: 435px; top: 637px; display: flex; gap: 4px; }
.tile { width: 16px; height: 6px; background: linear-gradient(135deg, #fff 30%, #5da04f 30% 60%, #dfeedd 60%); }

/* Console */
.cmd { position: absolute; left: 0; top: 126px; width: 839px; height: 511px; background: #fff; border-top: 1px solid #bdbdbd; display: flex; flex-direction: column; overflow: hidden; }
.cmd-title { height: 30px; line-height: 30px; margin-left: -100px; font-size: 11.5px; color: #888; white-space: nowrap; }
.cmd-body { flex: 1; display: flex; min-height: 0; }
.console { flex: 1; margin: 0 0 0 -2px; background: #000; color: #c8c8c8; font-family: "Liberation Mono", monospace; font-size: 13.33px; line-height: 16px; padding: 2px 0 0 0; white-space: pre; overflow: hidden; }
.cmd-scroll { width: 17px; background: #f0f0f0; border-right: 1px solid #a0a0a0; border-bottom: 1px solid #a0a0a0; display: flex; align-items: flex-end; justify-content: center; padding-bottom: 6px; }

/* Explorer */
.explorer { position: absolute; left: 284px; top: 14px; width: 784px; height: 593px; background: #fff; display: flex; flex-direction: column; box-shadow: 0 0 2px rgba(0,0,0,.12); }
.ex-title { height: 31px; display: flex; }
.qa { width: 229px; display: flex; align-items: center; padding-left: 9px; }
.qa-sep { width: 1px; height: 15px; background: #aaa; margin-left: 8px; }
.qa-props { margin-left: 10px; }
.qa-folder { margin-left: 9px; }
.qa-more { margin-left: 7px; }
.manage { width: 119px; margin-top: 4px; background: #e6c9f8; text-align: center; line-height: 27px; color: #333; }
.ex-name { margin-left: 13px; line-height: 31px; color: #222; }
.ex-ctl { margin-left: auto; display: flex; }
.ctl { width: 46px; height: 31px; display: flex; align-items: center; justify-content: center; }

.ex-tabs { height: 24px; display: flex; position: relative; border-bottom: 1px solid #dadbdc; }
.rtab { display: flex; align-items: center; justify-content: center; height: 24px; color: #333; padding-bottom: 2px; }
.rtab-file { width: 56px; background: #0f64ad; color: #fff; }
.rtab-home { width: 57px; background: #f5f6f7; border: 1px solid #dadbdc; border-bottom: 0; }
.rtab-share { width: 60px; }
.rtab-view { width: 53px; }
.rtab-app { width: 119px; margin-left: 3px; height: 23px; border-left: 1px solid #dadbdc; border-right: 1px solid #dadbdc; }
.ex-help { margin-left: auto; display: flex; align-items: center; gap: 8px; padding-right: 4px; }
.help { width: 16px; height: 16px; border-radius: 50%; background: #0f64ad; color: #fff; font-weight: 700; font-size: 12px; line-height: 16px; text-align: center; }

.ribbon { height: 91px; background: #f5f6f7; border-bottom: 1px solid #e2e3e4; display: flex; font-size: 11px; }
.group { display: flex; flex-direction: column; border-right: 1px solid #e0e1e2; }
.g-body { flex: 1; display: flex; padding-top: 3px; }
.g-label { height: 19px; text-align: center; color: #555; line-height: 20px; }
.g-clip { width: 263px; }
.g-clip .g-body { padding-left: 8px; }
.g-org { width: 164px; }
.g-org .g-body { padding-left: 8px; }
.g-new { width: 84px; }
.g-open { width: 132px; }
.g-open .g-body { padding-left: 5px; }
.g-sel { width: 115px; }
.g-sel .g-body { padding-left: 2px; }

.big { display: flex; flex-direction: column; align-items: center; text-align: center; line-height: 13px; color: #333; position: relative; }
.big > svg:first-child { height: 30px; margin: 5px 0 4px; }
.big span { white-space: nowrap; }
.off { color: #8a8a8a; }
.big-pin { width: 62px; }
.big-copy { width: 46px; }
.big-paste { width: 38px; }
.big-new { width: 50px; }
.big-props { width: 53px; }
.props-caret { margin-top: 5px; }

.smalls { display: flex; flex-direction: column; margin-left: 6px; }
.small { height: 22px; display: flex; align-items: center; gap: 3px; white-space: nowrap; }
.small > svg:first-child { width: 16px; }
.cr { margin-left: 2px; }
.smalls.two { margin-left: 0; padding-top: 8px; gap: 6px; }
.g-sep { width: 1px; height: 58px; background: #e4e5e6; margin: 4px 7px 0 8px; }
.g-org .smalls.two:first-child { width: 68px; }
.new-smalls { display: flex; flex-direction: column; gap: 5px; padding-top: 3px; margin-left: 1px; }
.mini { display: flex; align-items: center; gap: 2px; height: 16px; }

.ex-nav { height: 35px; display: flex; align-items: center; }
.nav-btn { display: flex; align-items: center; justify-content: center; }
.nb-back { margin-left: 12px; width: 14px; }
.nb-fwd { margin-left: 15px; width: 14px; }
.nb-down { margin-left: 13px; width: 9px; }
.nb-up { margin-left: 10px; width: 12px; }
.addr { margin-left: 7px; width: 455px; height: 21px; border: 1px solid #d9d9d9; display: flex; align-items: center; padding-left: 5px; }
.addr-folder { margin-right: 4px; }
.crumb-more { width: 12px; text-align: center; color: #666; font-size: 12px; margin-right: 5px; }
.crumb { color: #222; white-space: nowrap; }
.sep { margin: 0 9px; }
.addr-chev { margin-left: auto; margin-right: 3px; }
.addr-refresh { width: 20px; height: 19px; border-left: 1px solid #e5e5e5; display: flex; align-items: center; justify-content: center; }
.search { margin-left: 8px; width: 203px; height: 21px; border: 1px solid #d9d9d9; display: flex; align-items: center; justify-content: space-between; padding: 0 8px 0 9px; color: #666; white-space: nowrap; }

.ex-main { flex: 1; min-height: 0; display: flex; }
.tree { width: 140px; overflow: hidden; padding-top: 1px; }
.t { height: 24px; display: flex; align-items: center; white-space: nowrap; color: #222; overflow: hidden; }
.t > svg { width: 15px; margin-right: 5px; }
.t span { padding-bottom: 2px; }
.l0 { padding-left: 41px; }
.l1 { padding-left: 49px; }
.l2 { padding-left: 57px; }
.l3 { padding-left: 65px; }
.l4 { padding-left: 73px; }
.t.sel { background: #d4d4d4; }
.dim svg { opacity: .5; }
.treescroll { width: 16px; background: #f0f0f0; display: flex; flex-direction: column; align-items: center; padding: 6px 0 6px; margin-right: 4px; }
.treescroll-track { flex: 1; width: 100%; padding-top: 158px; }
.treescroll-thumb { height: 73px; background: #cdcdcd; }

.files { flex: 1; min-width: 0; display: flex; flex-direction: column; padding-top: 2px; }
.f-head { display: grid; grid-template-columns: 257px 144px 120px 80px; margin-left: 14px; height: 23px; }
.fh { border-right: 1px solid #e5e5e5; padding-left: 7px; color: #555; line-height: 23px; position: relative; }
.fh-name { padding-left: 3px; }
.sortcaret { position: absolute; left: 122px; top: -2px; }
.f-list { flex: 1; margin: 7px 0 0 14px; width: 598px; }
.f { display: grid; grid-template-columns: 264px 144px 120px 1fr; height: 21px; align-items: center; color: #6b6b6b; letter-spacing: -.12px; }
.f.sel { background: #cce8ff; border: 1px solid #99d1ff; grid-template-columns: 263px 144px 120px 1fr; }
.f.sel .f-name { padding-left: 5px; }
.f.sel .f-size { padding-right: 3px; }
.f-name { display: flex; align-items: center; gap: 4px; padding-left: 6px; color: #1f1f1f; white-space: nowrap; letter-spacing: 0; }
.f-size { text-align: right; padding-right: 4px; }
.hscroll { height: 17px; background: #f0f0f0; display: flex; align-items: stretch; }
.hs-btn { width: 17px; display: flex; align-items: center; justify-content: center; }
.hs-thumb { flex: 1; background: #cdcdcd; }

.ex-status { height: 24px; display: flex; align-items: center; color: #555; white-space: nowrap; padding-bottom: 2px; }
.st-items { margin-left: 14px; width: 65px; }
.st-sel { width: 85px; }
.views { margin-left: auto; display: flex; align-items: center; gap: 3px; margin-right: 8px; margin-top: 2px; }
.view { width: 21px; height: 21px; display: flex; align-items: center; justify-content: center; }
.view-pre { width: 15px; }
.view-on { background: #cce8ff; border: 1px solid #4aa3df; }

/* Taskbar */
.taskbar { height: 40px; background: #0a1a26; display: flex; align-items: stretch; position: relative; }
.start { width: 49px; display: flex; align-items: center; justify-content: center; }
.tb-search { width: 287px; background: #f0f0f0; border: 1px solid #c9c9c9; border-bottom: 0; display: flex; align-items: center; gap: 8px; padding-left: 12px; font-size: 14px; color: #222; }
.tk { width: 48px; display: flex; align-items: center; justify-content: center; position: relative; }
.tk-view { width: 51px; }
.tk-fox { margin-left: 2px; }
.tk-on1::after { content: ""; position: absolute; left: 5px; right: 4px; bottom: 0; height: 2px; background: #76b9ed; }
.tk-cmd::after { content: ""; position: absolute; left: 5px; right: 14px; bottom: 0; height: 2px; background: #76b9ed; }
.tk-active { background: #33444f; border-bottom: 2px solid #76b9ed; }
.tray { margin-left: auto; display: flex; align-items: center; color: #fff; }
.ti { width: 24px; display: flex; justify-content: center; }
.clock { width: 63px; display: flex; flex-direction: column; align-items: center; font-size: 12px; line-height: 18px; }
.ti-action { width: 42px; }
.ti-show { width: 12px; height: 40px; }
```
